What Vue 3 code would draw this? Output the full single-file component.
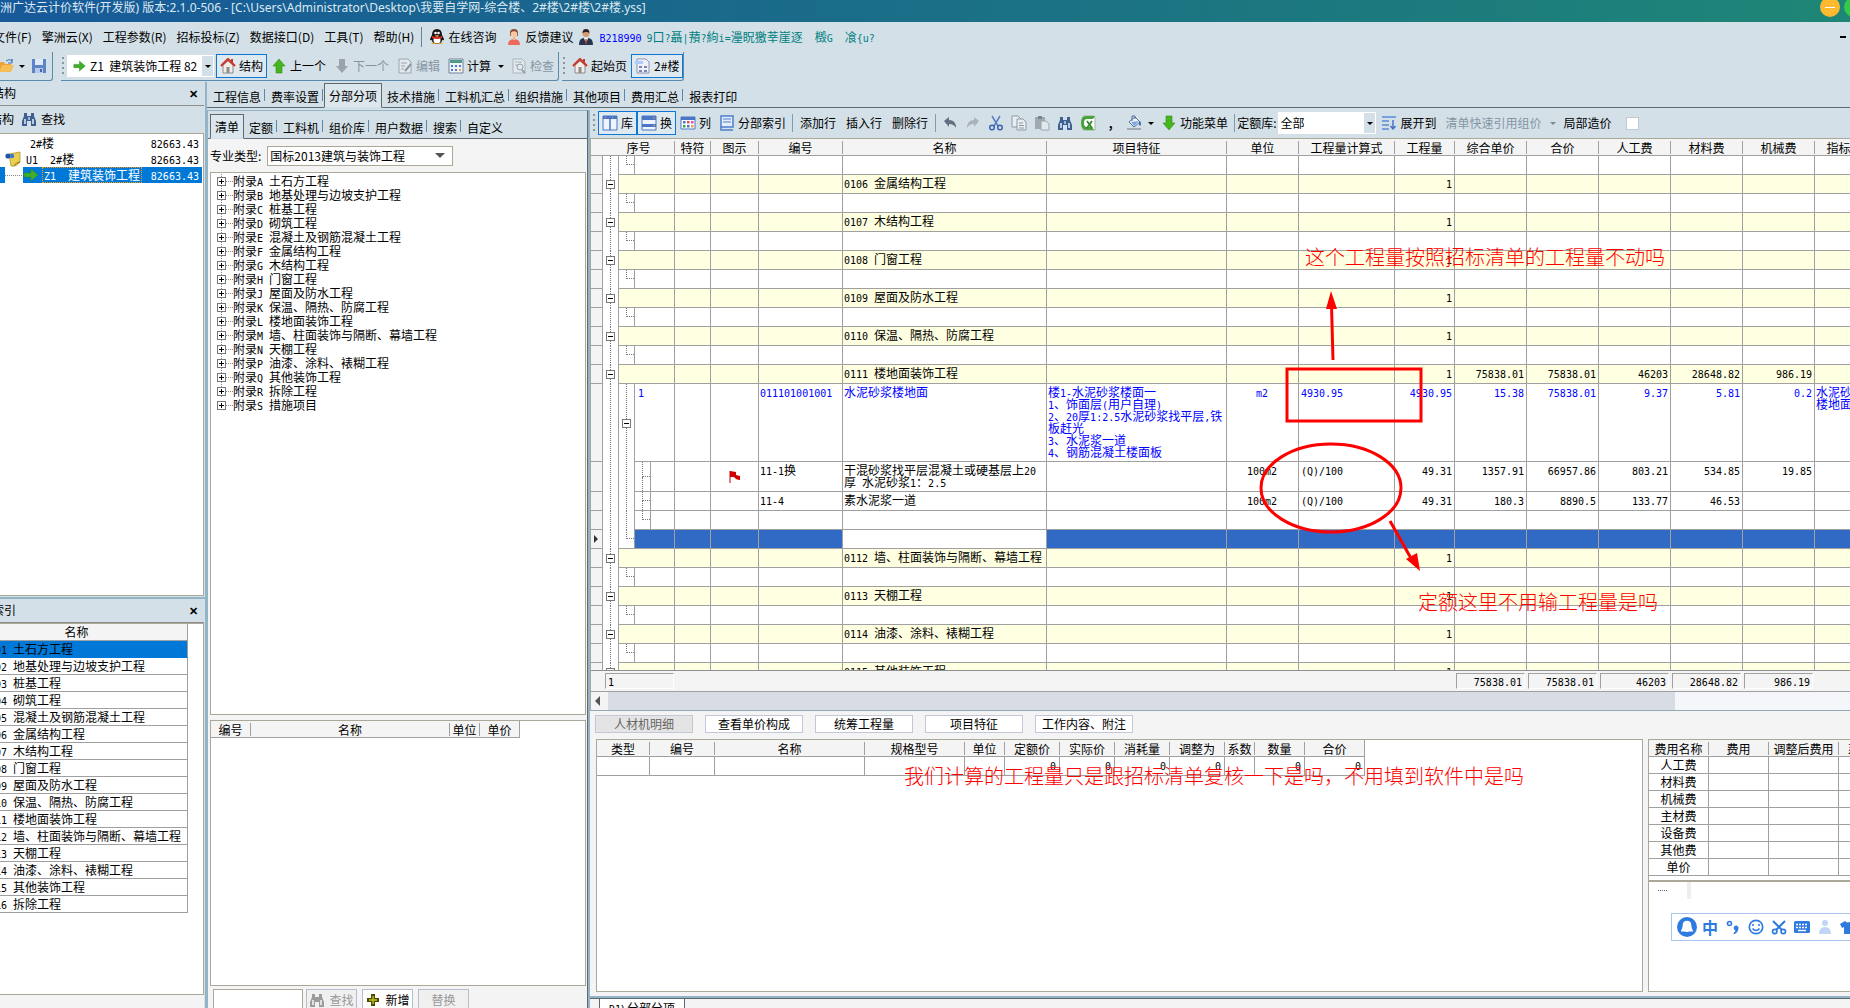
<script setup>
import { h } from 'vue'

const glyphs = {
  folder: '<path d="M1 14V4h5l1 2h6v2" fill="#e9a33a"/><path d="M1 14l3-7h12l-3 7z" fill="#f5bd55"/><path d="M8 3q3-3 6 0V1v4h-4" fill="none" stroke="#3f6fb5"/>',
  save: '<path d="M1 1h14v14H1z" fill="#5d83c9"/><path d="M4 1h8v6H4z" fill="#dfe9f7"/><path d="M4 10h8v5H4z" fill="#b7c9e8"/><path d="M9 11h2v3H9z" fill="#4469ad"/>',
  right: '<path d="M1 6h7V2l7 6-7 6v-4H1z" fill="#3fae2a" stroke="#2a8a1b" stroke-width=".6"/>',
  up: '<path d="M8 1l6 7h-3v7H5V8H2z" fill="#45b61e" stroke="#2f8f14" stroke-width=".6"/>',
  downGray: '<path d="M8 15l6-7h-3V1H5v7H2z" fill="#98a3aa"/>',
  down: '<path d="M8 15l6-7h-3V1H5v7H2z" fill="#45b61e" stroke="#2f8f14" stroke-width=".6"/>',
  home: '<path d="M3 7v8h10V7L8 3z" fill="#f3ede6" stroke="#8a8a8a"/><path d="M1 8l7-7 7 7" fill="none" stroke="#c8382c" stroke-width="2.2"/><path d="M6.500 9h3v6h-3z" fill="#8d8d8d"/><path d="M12 1v4" stroke="#c8382c" stroke-width="2"/>',
  edit: '<path d="M2 1h9l3 3v11H2z" fill="#e3e9ed" stroke="#9aa6ae"/><path d="M4 5h6M4 8h4M4 11h3" stroke="#9aa6ae"/><path d="M14 6l-6 7" stroke="#8b979f" stroke-width="2"/>',
  calc: '<path d="M1 1h14v14H1z" fill="#eef3f8" stroke="#6f8299"/><path d="M2 2h12v3H2z" fill="#4f9c86"/><path d="M3 7h2v2H3zM7 7h2v2H7zM3 11h2v2H3zM7 11h2v2H7z" fill="#4e78c8"/><path d="M11 7h2v2h-2z" fill="#4e78c8"/><path d="M11 11h2v2h-2z" fill="#e8a33c"/>',
  check: '<path d="M2 1h9l3 3v11H2z" fill="#e3e9ed" stroke="#a9b4bb"/><path d="M4 4h7M4 7h3" stroke="#a9b4bb"/><circle cx="9" cy="9" r="3" fill="none" stroke="#95a1a9"/><path d="M11 12l3 3" stroke="#95a1a9" stroke-width="2"/>',
  doc: '<path d="M2 1h9l3 3v11H2z" fill="#eef1f8" stroke="#8f93b8"/><path d="M0 3h8v3H0z" fill="#a9cdf5"/><path d="M4 8h3v2H4zM9 8h3v2H9zM4 12h3v2H4zM9 12h3v2H9z" fill="#8084b4"/>',
  find: '<path d="M3 2h3v3h4V2h3v3l2 5v5h-5v-5H6v5H1v-5l2-5z" fill="#3f608f"/><path d="M3 8h2v5H3zM11 8h2v5h-2z" fill="#b9cbe4"/><path d="M7 6h2v3H7z" fill="#9db5d6"/>',
  findGray: '<path d="M3 2h3v3h4V2h3v3l2 5v5h-5v-5H6v5H1v-5l2-5z" fill="#9b9b9b"/><path d="M3 8h2v5H3zM11 8h2v5h-2z" fill="#e0e0e0"/>',
  lib: '<path d="M1 1h14v14H1z" fill="#eef4fd" stroke="#4a76c4"/><path d="M1 1h14v3H1z" fill="#4a76c4"/><path d="M8 4v11" stroke="#4a76c4" stroke-width="1.500"/><path d="M3 2.500h1M10 2.500h1" stroke="#f28b6f"/>',
  swap: '<path d="M1 1h14v14H1z" fill="#eef4fd" stroke="#4a76c4"/><path d="M1 1h14v4H1zM1 9h14v3H1z" fill="#4a76c4"/><path d="M12 3h2M12 10.500h2" stroke="#f28b6f"/>',
  cols: '<path d="M1 2h14v12H1z" fill="#fff" stroke="#4a76c4"/><path d="M1 2h14v3H1z" fill="#4a76c4"/><path d="M3 6h2.500v2.500H3zM7 10h2.500v2.500H7z" fill="#3f78d8"/><path d="M7 6h2.500v2.500H7z" fill="#e54b4b"/><path d="M11 6h2.500v2.500H11z" fill="#e54bb0"/><path d="M3 10h2.500v2.500H3z" fill="#38a838"/><path d="M11 10h2.500v2.500H11z" fill="#e5a13a"/>',
  index: '<path d="M2 1h12v11H2z" fill="#e6eefb" stroke="#4f7ccb" stroke-width="1.500"/><path d="M4 4h8M4 7h8" stroke="#4f7ccb"/><path d="M2 12v3h12" fill="none" stroke="#4f7ccb" stroke-width="1.500"/>',
  undo: '<path d="M2 6l5-4v3q7 0 7 8-2-4-7-4v3z" fill="#5e6f80"/>',
  redo: '<path d="M14 6L9 2v3q-7 0-7 8 2-4 7-4v3z" fill="#a9b3bb"/>',
  cut: '<path d="M4 1l6 10M12 1L6 11" stroke="#5b7fc0" stroke-width="1.500"/><circle cx="4" cy="12.500" r="2.300" fill="none" stroke="#3d62b0" stroke-width="1.500"/><circle cx="12" cy="12.500" r="2.300" fill="none" stroke="#3d62b0" stroke-width="1.500"/>',
  copy: '<path d="M1 1h6l3 3v8H1z" fill="#e8edf1" stroke="#8e9aa3"/><path d="M6 4h6l3 3v8H6z" fill="#e8edf1" stroke="#8e9aa3"/><path d="M8 8h4M8 10.500h5M8 13h5" stroke="#8e9aa3"/>',
  paste: '<path d="M1 2h10v12H1z" fill="#9fabb3"/><path d="M4 1h4v3H4z" fill="#74828c"/><path d="M7 6h5l3 3v6H7z" fill="#e3e8ec" stroke="#9aa6ae"/>',
  excel: '<path d="M3 1h11l1 2v12H3z" fill="#fff" stroke="#9fb49f"/><path d="M15 1H6Q1 1 1 8t5 7h8l-2-3H7Q4 12 4 8t3-4h6z" fill="#4aa23c"/><path d="M7 6l5 7M12 6l-5 7" stroke="#2f8a2a" stroke-width="1.800"/>',
  paint: '<path d="M3 7l6-5 5 5-6 5z" fill="#eef3fa" stroke="#50709e"/><path d="M6 6V1h3v3" fill="none" stroke="#50709e"/><path d="M5 7l8-1-5 5z" fill="#7da6dc"/><path d="M14 6q2 3 0 5-2-2 0-5" fill="#2f69b5"/><path d="M1 13h14v2H1z" fill="#a3a9ae"/>',
  expand: '<path d="M1 2h14M1 6h7M1 10h7M1 14h7" stroke="#5a8ad6" stroke-width="1.600"/><path d="M12 5v8M9.500 11l2.500 3 2.500-3" fill="none" stroke="#3f6fc8" stroke-width="1.400"/>',
  qq: '<path d="M8 0q5 0 5 6l2 4q0 2-2 1 0 4-5 4t-5-4q-2 1-2-1l2-4q0-6 5-6" fill="#161616"/><ellipse cx="8" cy="11" rx="3.500" ry="3.500" fill="#fff"/><path d="M3 7q5 2 10 0v2q-5 2-10 0z" fill="#e02b20"/><circle cx="6.500" cy="4" r="1.300" fill="#fff"/><circle cx="9.500" cy="4" r="1.300" fill="#fff"/><path d="M5.500 6.200h5L8 7.500z" fill="#f5a41c"/><path d="M2 15q2-3 5 0zM9 15q3-3 5 0z" fill="#f5a41c"/>',
  girl: '<path d="M4 4q0-4 4-4t4 4v3H4z" fill="#8d4a2e"/><circle cx="8" cy="5.500" r="3.300" fill="#f6c9a4"/><path d="M2 16q0-6 6-6t6 6z" fill="#ee6a5c"/><path d="M7 8h2v3H7z" fill="#f0b78f"/>',
  man: '<circle cx="8" cy="4.500" r="3.500" fill="#d79b72"/><path d="M4.500 4q0-4 3.500-4t3.500 4q-3-2-7 0" fill="#2c2422"/><path d="M1 16q0-7 5-7h4q5 0 5 7z" fill="#26364f"/><path d="M6 9h4l-2 6z" fill="#fff"/><path d="M7.500 10h1l.5 4-1 1-1-1z" fill="#b32727"/>',
  book: '<path d="M4 3l11-2v10q-3 5-9 4z" fill="#e9cf52" stroke="#a98d1e" stroke-width=".7"/><path d="M15 11q-4 0-6 4" fill="none" stroke="#8d7415"/><circle cx="3" cy="5" r="2.600" fill="#2456a8"/><circle cx="7" cy="5" r="2.200" fill="#3c78d0"/>',
  flag: '<path d="M4 2v12" stroke="#b00" /><path d="M4 2l6 1v3l4 1v4q-4 0-6-3H4z" fill="#cf0000"/>',
  plus: '<path d="M6 2h4v4h4v4h-4v4H6v-4H2V6h4z" fill="#4a4a00"/><path d="M7.300 4h1.400v3.300H12v1.400H8.700V12H7.300V8.700H4V7.300h3.300z" fill="#c9c21a"/>',
  ime: '<circle cx="8" cy="8" r="8" fill="#2e7be0"/><path d="M8 3q3.500 0 3.500 4 0 2 1.500 4.500h-3L8.500 12h-1L6 11.500H3Q4.500 9 4.500 7 4.500 3 8 3" fill="#fff"/>',
  comma: '<circle cx="4.500" cy="4.500" r="2" fill="none" stroke="#2e7be0" stroke-width="1.600"/><path d="M9 15q4-2 4-5.500a2 2 0 1 0-2 1.500q0 2-2 3z" fill="#2e7be0" stroke="#2e7be0"/>',
  smile: '<circle cx="8" cy="8" r="6.700" fill="none" stroke="#2e7be0" stroke-width="1.700"/><path d="M5 5v2M11 5v2M4.500 9.500q3.500 4 7 0" fill="none" stroke="#2e7be0" stroke-width="1.600"/>',
  imeCut: '<path d="M2 2l9 9M14 2l-9 9" stroke="#2e7be0" stroke-width="2"/><circle cx="3.700" cy="12.500" r="2.200" fill="none" stroke="#2e7be0" stroke-width="1.700"/><circle cx="12.300" cy="12.500" r="2.200" fill="none" stroke="#2e7be0" stroke-width="1.700"/>',
  keys: '<rect x="0" y="2" width="16" height="12" rx="1.500" fill="#2e7be0"/><path d="M2 5.500h12M2 8.500h12" stroke="#fff" stroke-width="1.700" stroke-dasharray="2 1"/><path d="M4 11.500h8" stroke="#fff" stroke-width="1.500"/>',
  person: '<circle cx="8" cy="4" r="3" fill="#c0d6f4"/><path d="M2 15q0-7 6-7t6 7z" fill="#c0d6f4"/>',
  shirt: '<path d="M0 5l5-3q3 3 6 0l5 3-2 4-2-1v7H4V8L2 9z" fill="#2e7be0"/>',
}
const Icon = (p) => h('svg', { class: 'ico', viewBox: '0 0 16 16', 'aria-hidden': 'true', innerHTML: glyphs[p.name] })
Icon.props = ['name']

// Splits Latin runs from Han text so they sit on the half-width grid.
const Mix = (p) =>
  h('span', { class: 'mix' }, (p.t.match(/[\x20-\x7e]+|[^\x20-\x7e]+/g) || []).map((s) =>
    /^[\x20-\x7e]/.test(s) ? h('span', { class: 'lat' }, s) : s))
Mix.props = ['t']

const menus = ['文件(F)', '擎洲云(X)', '工程参数(R)', '招标投标(Z)', '数据接口(D)', '工具(T)', '帮助(H)']
const mainTabs = ['工程信息', '费率设置', '分部分项', '技术措施', '工料机汇总', '组织措施', '其他项目', '费用汇总', '报表打印']
const subTabs = ['清单', '定额', '工料机', '组价库', '用户数据', '搜索', '自定义']

const names = ['土石方工程', '地基处理与边坡支护工程', '桩基工程', '砌筑工程', '混凝土及钢筋混凝土工程', '金属结构工程',
  '木结构工程', '门窗工程', '屋面及防水工程', '保温、隔热、防腐工程', '楼地面装饰工程', '墙、柱面装饰与隔断、幕墙工程',
  '天棚工程', '油漆、涂料、裱糊工程', '其他装饰工程', '拆除工程']
const letters = 'ABCDEFGHJKLMNPQRS'
const appendix = [...names, '措施项目'].map((n, i) => `附录${letters[i]} ${n}`)
const code = (i) => '01' + String(i + 1).padStart(2, '0')
const indexRows = names.map((n, i) => `${code(i)} ${n}`)

const cols = [
  ['序号', 72], ['特符', 36], ['图示', 48], ['编号', 84], ['名称', 204], ['项目特征', 180], ['单位', 72], ['工程量计算式', 96],
  ['工程量', 60], ['综合单价', 72], ['合价', 72], ['人工费', 72], ['材料费', 72], ['机械费', 72], ['指标名称', 72],
]
const blank = () => ({ boxes: ['v', 'l'], h: 19 })
const section = (i, nums = []) => ({ kind: 'section', boxes: ['e'], h: 19, name: [indexRows[i]], nums: ['1', ...nums] })
const rows = [
  blank(),
  section(5), blank(), section(6), blank(), section(7), blank(), section(8), blank(), section(9), blank(),
  section(10, ['75838.01', '75838.01', '46203', '28648.82', '986.19']),
  {
    kind: 'item', boxes: ['v', 'f'], h: 78, no: '1', code: '011101001001', name: ['水泥砂浆楼地面'],
    feat: ['楼1-水泥砂浆楼面一', '1、饰面层(用户自理)', '2、20厚1:2.5水泥砂浆找平层,铁', '板赶光', '3、水泥浆一道', '4、钢筋混凝土楼面板'],
    unit: 'm2', expr: '4930.95', nums: ['4930.95', '15.38', '75838.01', '9.37', '5.81', '0.2'], tag: ['水泥砂浆', '楼地面'],
  },
  {
    boxes: ['v', 'v', 't'], h: 30, flag: true, code: '11-1换', name: ['干混砂浆找平层混凝土或硬基层上20', '厚 水泥砂浆1：2.5'],
    unit: '100m2', expr: '(Q)/100', nums: ['49.31', '1357.91', '66957.86', '803.21', '534.85', '19.85'],
  },
  {
    boxes: ['v', 'v', 't'], h: 19, code: '11-4', name: ['素水泥浆一道'],
    unit: '100m2', expr: '(Q)/100', nums: ['49.31', '180.3', '8890.5', '133.77', '46.53'],
  },
  { boxes: ['v', 'v', 'l'], h: 19 },
  { kind: 'current', boxes: ['v', 'l'], h: 19 },
  section(11), blank(), section(12), blank(), section(13), blank(), section(14),
]
const totals = ['75838.01', '75838.01', '46203', '28648.82', '986.19']

const detailTabs = ['人材机明细', '查看单价构成', '统筹工程量', '项目特征', '工作内容、附注']
const detailCols = [['类型', 53], ['编号', 65], ['名称', 150], ['规格型号', 100], ['单位', 40], ['定额价', 55, '0'], ['实际价', 55, '0'],
  ['消耗量', 55, '0'], ['调整为', 55, '0'], ['系数', 30], ['数量', 50, '0'], ['合价', 60, '0']]
const feeCols = [['费用名称', 60], ['费用', 60], ['调整后费用', 70], ['系数', 42]]
const fees = ['人工费', '材料费', '机械费', '主材费', '设备费', '其他费', '单价']
const itemCols = [['编号', 40], ['名称', 199], ['单位', 30], ['单价', 40]]
const sum = (list) => list.reduce((a, c) => a + c[1], 0)
</script>

<template>
  <div class="app">
    <header class="title">
      <h1>洲广达云计价软件(开发版) 版本:2.1.0-506 - [C:\Users\Administrator\Desktop\我要自学网-综合楼、2#楼\2#楼\2#楼.yss]</h1>
      <div class="winbtns">
        <button class="min" aria-label="最小化"></button>
        <button class="max" aria-label="最大化"></button>
      </div>
    </header>

    <nav class="menubar">
      <button v-for="m in menus" :key="m">{{ m }}</button>
      <i class="sep"></i>
      <button class="pic"><Icon name="qq" />在线咨询</button>
      <button class="pic"><Icon name="girl" />反馈建议</button>
      <Icon name="man" />
      <span class="account"><Mix class="blue" t="B218990:" /><Mix class="teal" t="9口?聶|蕷?絇i=灅眖獥莘崖逐  檓G  飡{u?" /></span>
      <button class="mdi" aria-label="还原"></button>
    </nav>

    <div class="toolbar">
      <div class="group">
        <button aria-label="打开"><Icon name="folder" /></button><i class="caret"></i>
        <button class="wide" aria-label="保存"><Icon name="save" /></button>
      </div>
      <div class="group">
        <i class="grip"></i>
        <div class="picker">
          <Icon name="right" />
          <select aria-label="单位工程"><option>Z1&nbsp; 建筑装饰工程 82</option></select>
          <i class="drop"></i>
        </div>
        <button class="on"><Icon name="home" />结构</button>
        <button><Icon name="up" />上一个</button>
        <button disabled><Icon name="downGray" />下一个</button>
        <button disabled><Icon name="edit" />编辑</button>
        <button><Icon name="calc" />计算</button><i class="caret"></i>
        <button disabled><Icon name="check" />检查</button>
      </div>
      <div class="group">
        <i class="grip"></i>
        <button><Icon name="home" />起始页</button>
        <button class="on"><Icon name="doc" />2#楼</button>
      </div>
    </div>

    <div class="body">
      <aside class="left">
        <section class="pane structure">
          <div class="panehead"><h2>结构</h2><button class="close" aria-label="关闭">✕</button></div>
          <div class="panetools"><span>结构</span><button><Icon name="find" />查找</button></div>
          <ul class="project">
            <li class="root"><Mix t="2#楼" /><Mix class="val" t="82663.43" /></li>
            <li class="unit"><Icon name="book" /><Mix t="U1  2#楼" /><Mix class="val" t="82663.43" /></li>
            <li class="leaf"><i class="gap"></i><div class="hit"><Icon name="right" /><Mix class="focus" t="Z1  建筑装饰工程" /><Mix class="val" t="82663.43" /></div></li>
          </ul>
        </section>
        <section class="pane indexes">
          <div class="panehead"><h2>索引</h2><button class="close" aria-label="关闭">✕</button></div>
          <div class="indexbox">
            <table class="index">
              <thead><tr><th>名称</th></tr></thead>
              <tbody><tr v-for="(r, i) in indexRows" :key="r" :class="{ sel: i === 0 }"><td><Mix :t="r" /></td></tr></tbody>
            </table>
          </div>
          <div class="status"></div>
        </section>
      </aside>

      <main class="work">
        <nav class="tabs">
          <button v-for="t in mainTabs" :key="t" :class="{ cur: t === '分部分项' }">{{ t }}</button>
        </nav>
        <div class="cols">
          <section class="library">
            <nav class="tabs small">
              <button v-for="t in subTabs" :key="t" :class="{ cur: t === '清单' }">{{ t }}</button>
            </nav>
            <div class="type">
              <label for="kind">专业类型:</label>
              <div class="kindbox"><select id="kind"><option>国标2013建筑与装饰工程</option></select><i class="drop"></i></div>
            </div>
            <ul class="tree">
              <li v-for="a in appendix" :key="a"><button class="box plus" aria-label="展开"></button><i class="dash"></i><Mix :t="a" /></li>
            </ul>
            <div class="items">
              <table :style="{ width: sum(itemCols) + 'px' }">
                <colgroup><col v-for="c in itemCols" :key="c[0]" :style="{ width: c[1] + 'px' }"></colgroup>
                <thead><tr><th v-for="c in itemCols" :key="c[0]"><span>{{ c[0] }}</span></th></tr></thead>
              </table>
            </div>
            <div class="search">
              <input aria-label="查找内容">
              <button disabled><Icon name="findGray" />查找</button>
              <button><Icon name="plus" />新增</button>
              <button disabled>替换</button>
            </div>
          </section>

          <section class="bill">
            <div class="tools">
              <i class="grip"></i>
              <button class="on"><Icon name="lib" />库</button><button class="on"><Icon name="swap" />换</button>
              <button><Icon name="cols" />列</button>
              <button><Icon name="index" />分部索引</button>
              <i class="sep"></i>
              <button class="txt">添加行</button><button class="txt">插入行</button><button class="txt">删除行</button>
              <i class="sep"></i>
              <button v-for="n in ['undo', 'redo', 'cut', 'copy', 'paste', 'find', 'excel']" :key="n" class="bare" :aria-label="n"><Icon :name="n" /></button>
              <button class="bare"><b>,</b></button>
              <button class="bare" aria-label="填充"><Icon name="paint" /></button><i class="caret"></i>
              <button><Icon name="down" />功能菜单</button>
              <i class="sep"></i>
              <label for="lib">定额库:</label>
              <div class="libbox"><select id="lib"><option>全部</option></select><i class="drop"></i></div>
              <button><Icon name="expand" />展开到</button>
              <button class="txt" disabled>清单快速引用组价</button><i class="caret dim"></i>
              <label class="partial" for="part">局部造价</label><input id="part" type="checkbox">
            </div>

            <div class="grid">
              <div class="gridview">
                <table :style="{ width: sum(cols) + 12 + 'px' }">
                  <colgroup><col class="gutcol"><col v-for="c in cols" :key="c[0]" :style="{ width: c[1] + 'px' }"></colgroup>
                  <thead><tr><th></th><th v-for="c in cols" :key="c[0]"><span>{{ c[0] }}</span></th></tr></thead>
                  <tbody>
                    <tr v-for="(r, i) in rows" :key="i" :class="r.kind" :style="{ height: r.h + 'px' }">
                      <td class="gut"><i v-if="r.kind === 'current'"></i></td>
                      <td class="seq" :style="{ height: r.h + 'px' }">
                        <div>
                          <span v-for="(b, k) in r.boxes" :key="k" class="lv" :class="[b, { end: k && k === r.boxes.length - 1 && b !== 'f' }]">
                            <button v-if="b === 'e' || b === 'f'" class="box" aria-label="折叠"></button>
                          </span>
                          <span class="fill"><Mix v-if="r.no" :t="r.no" /></span>
                        </div>
                      </td>
                      <td></td>
                      <td class="mark"><Icon v-if="r.flag" name="flag" /></td>
                      <td><div v-if="r.code"><Mix :t="r.code" /></div></td>
                      <td class="name"><div v-for="l in r.name" :key="l"><Mix :t="l" /></div></td>
                      <td><div v-for="l in r.feat" :key="l"><Mix :t="l" /></div></td>
                      <td class="mid"><div v-if="r.unit"><Mix :t="r.unit" /></div></td>
                      <td class="expr"><div v-if="r.expr"><Mix :t="r.expr" /></div></td>
                      <td v-for="n in 6" :key="n" class="num"><div v-if="r.nums && r.nums[n - 1]"><Mix :t="r.nums[n - 1]" /></div></td>
                      <td><div v-for="l in r.tag" :key="l"><Mix :t="l" /></div></td>
                    </tr>
                  </tbody>
                </table>
              </div>
              <div class="foot">
                <span class="count"><Mix t="1" /></span>
                <span v-for="(t, i) in totals" :key="i" class="total"><Mix :t="t" /></span>
              </div>
              <div class="scroll"><button aria-label="向左"></button><i class="thumb"></i></div>
            </div>

            <div class="detail">
              <div class="dtabs"><button v-for="(t, i) in detailTabs" :key="t" :class="{ cur: i === 0 }">{{ t }}</button></div>
              <div class="dboxes">
                <div class="dbox">
                  <table :style="{ width: sum(detailCols) + 'px' }">
                    <colgroup><col v-for="c in detailCols" :key="c[0]" :style="{ width: c[1] + 'px' }"></colgroup>
                    <thead><tr><th v-for="c in detailCols" :key="c[0]"><span>{{ c[0] }}</span></th></tr></thead>
                    <tbody><tr><td v-for="c in detailCols" :key="c[0]" class="num"><Mix v-if="c[2]" :t="c[2]" /></td></tr></tbody>
                  </table>
                </div>
                <div class="fbox">
                  <div class="fees">
                    <table :style="{ width: sum(feeCols) + 'px' }">
                      <colgroup><col v-for="c in feeCols" :key="c[0]" :style="{ width: c[1] + 'px' }"></colgroup>
                      <thead><tr><th v-for="c in feeCols" :key="c[0]"><span>{{ c[0] }}</span></th></tr></thead>
                      <tbody><tr v-for="f in fees" :key="f"><td class="mid">{{ f }}</td><td></td><td></td><td></td></tr></tbody>
                    </table>
                  </div>
                  <div class="note"><i class="dots"></i><i class="bar"></i></div>
                  <div class="ime">
                    <Icon class="big" name="ime" /><b>中</b><Icon v-for="n in ['comma', 'smile', 'imeCut', 'keys', 'person', 'shirt']" :key="n" :name="n" />
                  </div>
                </div>
              </div>
            </div>
            <div class="sheets"><button><Mix t="D1\分部分项" /></button></div>
          </section>
        </div>
      </main>
    </div>

    <svg class="notes">
      <g fill="none" stroke="#f00" stroke-width="3">
        <path d="M1333 360L1331.500 305" />
        <rect x="1287" y="369" width="134" height="52" />
        <ellipse cx="1331" cy="488" rx="70" ry="44" />
        <path d="M1390 521L1412 560" />
      </g>
      <path d="M1331 291l-5 18h11zM1420 571l-14-12 11-6z" fill="#f00" />
      <text x="1305" y="265">这个工程量按照招标清单的工程量不动吗</text>
      <text x="1418" y="610">定额这里不用输工程量是吗</text>
      <text x="904" y="784">我们计算的工程量只是跟招标清单复核一下是吗，不用填到软件中是吗</text>
    </svg>
  </div>
</template>

<style>
html, body { margin: 0; overflow: hidden; }
.ico { width: 16px; height: 16px; flex: none; display: block; }
.mix { white-space: pre; }
.mix .lat { font-family: "DejaVu Sans Mono", "Liberation Mono", monospace; font-size: 10px; line-height: 0; }
</style>

<style scoped>
.app {
  height: 100vh; display: flex; flex-direction: column; overflow: hidden; position: relative;
  background: #d4e0e8; color: #000; font: 12px/16px "Noto Sans CJK SC", "Noto Sans", sans-serif;
}
.app *, .app *::before, .app *::after { box-sizing: border-box; }
h1, h2, ul { margin: 0; padding: 0; font-size: 12px; font-weight: 400; list-style: none; }
button, select, input { font: inherit; color: inherit; border: 0; padding: 0; margin: 0; background: none; border-radius: 0; }
select { appearance: none; outline: 0; }
button { display: flex; align-items: center; white-space: nowrap; }
button:disabled { color: #8496a3; }
i { flex: none; }

.title { height: 22px; flex: none; display: flex; justify-content: space-between; background: linear-gradient(90deg, #17599a, #1b7383 60%, #1e8676); color: #dce9f2; overflow: hidden; }
.title h1 { line-height: 16px; white-space: nowrap; font-family: "Noto Sans", "Noto Sans CJK SC", sans-serif; }
.winbtns { display: flex; gap: 4px; margin: -3px -14px 0 0; }
.winbtns button { width: 20px; height: 20px; border-radius: 50%; justify-content: center; }
.min { background: #fdb92f; }
.min::after { content: ""; width: 10px; height: 1px; background: #fff; }
.max { background: #35c94a; }

.menubar { height: 30px; flex: none; display: flex; align-items: center; margin-left: -12px; }
.menubar > button { padding: 0 5px; }
.menubar .sep { width: 1px; height: 20px; background: #5f87a3; margin: 0 2px; }
.menubar .pic { gap: 3px; }
.account { display: flex; gap: 4px; margin-left: 5px; }
.blue { color: #00f; width: 43px; overflow: hidden; }
.teal { color: #008080; }
.menubar .mdi { margin-left: auto; margin-right: 4px; width: 6px; height: 2px; padding: 0; background: #000; }

.toolbar { height: 30px; flex: none; display: flex; padding-bottom: 1px; }
.toolbar .group { display: flex; align-items: center; border-bottom: 1px solid #5b8bab; border-right: 1px solid #5b8bab; border-bottom-right-radius: 3px; height: 29px; margin-right: 3px; }
.toolbar .group:first-child { margin-left: -2px; width: 55px; margin-right: 8px; }
.toolbar button { height: 24px; gap: 3px; padding: 0 4px; }
.toolbar .group:first-child button { padding: 0; }
.toolbar .group:first-child .caret { margin: 0 6px 0 5px; }
.toolbar .on, .tools > .on { border: 1px solid #0f78d4; background: #dfe9f0; padding: 0 3px; }
.caret { width: 0; border: 3px solid transparent; border-top-color: #000; border-bottom: 0; margin: 0 3px; }
.caret.dim { border-top-color: #7b8c98; }
.grip { width: 2px; height: 18px; margin: 0 3px 0 1px; background: repeating-linear-gradient(#8b979e 0 2px, transparent 2px 5px); }
.picker { display: flex; align-items: center; width: 147px; height: 22px; background: #fff; padding-left: 2px; margin-right: 2px; }
.picker .ico { width: 13px; margin: 0 4px; }
.picker select { flex: 1; min-width: 0; height: 22px; }
.drop { width: 12px; height: 100%; background: #d4e0e8; display: flex; align-items: center; justify-content: center; border: 1px solid #fff; border-left: 0; pointer-events: none; }
.drop::after { content: ""; border: 3px solid transparent; border-top-color: #000; border-bottom: 0; }

.body { flex: 1; min-height: 0; display: flex; }
.left { width: 207px; flex: none; display: flex; flex-direction: column; border-right: 2px solid #93b3c6; }
.pane { display: flex; flex-direction: column; padding-right: 1px; }
.structure { flex: 1; min-height: 0; border-bottom: 2px solid #93b3c6; padding-bottom: 1px; }
.indexes { height: 409px; flex: none; }
.panehead { height: 24px; flex: none; display: flex; align-items: center; justify-content: space-between; border-bottom: 1px solid #8e8e8e; padding-right: 6px; padding-bottom: 2px; margin-left: -8px; }
.close { font-size: 11px; line-height: 16px; font-weight: 700; }
.panetools { height: 27px; flex: none; display: flex; align-items: center; margin-left: -10px; gap: 7px; padding-bottom: 2px; }
.panetools button { gap: 4px; }
.project { flex: 1; background: #fff; border: 1px solid #aca899; border-left: 0; padding-top: 1px; }
.project li { height: 16px; display: flex; align-items: center; padding-right: 4px; }
.project .val { margin-left: auto; }
.root { padding-left: 30px; }
.unit { padding-left: 5px; gap: 5px; }
.project .leaf { border-left: 5px solid #0078d7; padding-right: 1px; }
.gap { width: 18px; height: 16px; background: linear-gradient(90deg, #888 50%, transparent 0) 8px 8px / 2px 1px repeat-x; }
.hit { flex: 1; display: flex; align-items: center; background: #0078d7; color: #fff; height: 16px; padding-right: 3px; }
.hit .focus { outline: 1px dotted #f90; outline-offset: -1px; padding: 0 2px; line-height: 16px; margin-left: 3px; }

table { border-collapse: separate; border-spacing: 0; table-layout: fixed; }
th, td { padding: 0; font-weight: 400; border-right: 1px solid #a0a0a0; border-bottom: 1px solid #a0a0a0; white-space: nowrap; overflow: hidden; }
th { background: #f4f4f4; height: 17px; line-height: 16px; border-right: 0; text-align: center; }
th span { display: block; height: 13px; line-height: 13px; margin: 1px 0; border-right: 1px solid #a0a0a0; }
td { line-height: 12px; }
.indexbox { flex: 1; background: #fff; border: 1px solid #aca899; border-left: 0; overflow: hidden; }
.index { width: 222px; margin-left: -34px; }
.index th { border-right: 1px solid #a0a0a0; }
.index td { height: 17px; padding-left: 17px; line-height: 16px; }
.index .sel td { background: #0078d7; border-bottom-color: #0078d7; }
.status { height: 13px; flex: none; background: #f4f4f4; }

.work { flex: 1; min-width: 0; display: flex; flex-direction: column; }
.tabs { height: 26px; flex: none; display: flex; align-items: flex-end; padding-left: 1px; position: relative; box-shadow: inset 0 -1px #5d6a72; }
.tabs button { height: 23px; padding: 0 4px 0 5px; margin-right: 1px; background: linear-gradient(#5f87a3, #5f87a3) 100% 4px / 1px 12px no-repeat; }
.tabs button.cur { height: 25px; border: 1px solid #5d6a72; border-bottom-color: #d4e0e8; background: #dbe6ed; padding: 0 4px; margin: 0; }
.tabs button:last-child { background: none; }
.cols { flex: 1; min-height: 0; display: flex; padding-top: 2px; }
.library { width: 381px; flex: none; display: flex; flex-direction: column; background: #f4f4f4; border-top: 1px solid #93b3c6; border-left: 1px solid #93b3c6; border-right: 1px solid #5d6a72; padding: 0 0 0 2px; }
.tabs.small { height: 28px; background: #d4e0e8; margin-left: -2px; padding-left: 2px; }
.type { height: 33px; display: flex; align-items: center; gap: 6px; flex: none; }
.kindbox { width: 186px; height: 20px; border: 1px solid #aca899; background: #fff; display: flex; align-items: center; padding: 0 6px 0 2px; }
.kindbox select { flex: 1; height: 18px; }
.kindbox .drop { background: none; border: 0; }
.kindbox .drop::after { border: 5px solid transparent; border-top-color: #555; border-bottom: 0; }
.tree { flex: 1; background: #fff; border: 1px solid #aca899; padding: 1px 0 0 6px; margin-right: 1px; }
.tree li { height: 14px; display: flex; align-items: center; background: linear-gradient(#888 50%, transparent 0) 4px 0 / 1px 2px repeat-y; }
.tree li:last-child { background: none; }
.dash { width: 7px; height: 1px; background: repeating-linear-gradient(90deg, #888 0 1px, transparent 1px 2px); }
.box { width: 9px; height: 9px; flex: none; border: 1px solid #777; background: linear-gradient(#000, #000) center / 5px 1px no-repeat, #fff; }
.box.plus { background: linear-gradient(#000, #000) center / 5px 1px no-repeat, linear-gradient(#000, #000) center / 1px 5px no-repeat, #fff; }
.items { height: 266px; flex: none; background: #fff; border: 1px solid #aca899; margin: 5px 1px 0 0; }
.items th:last-child { border-right: 1px solid #a0a0a0; }
.search { height: 22px; flex: none; display: flex; gap: 5px; padding: 3px 0 0 3px; overflow: hidden; }
.search > * { height: 22px; flex: none; }
.search input { width: 90px; background: #fff; border: 1px solid #aca899; margin-right: -2px; }
.search button { width: 51px; justify-content: center; gap: 4px; border: 1px solid #b9bdcb; background: #fff; }
.search button:disabled { background: #f0f0f0; color: #999; }

.bill { flex: 1; min-width: 0; display: flex; flex-direction: column; border-left: 2px solid #93b3c6; }
.tools { height: 28px; flex: none; display: flex; align-items: center; padding: 0 0 2px 2px; overflow: hidden; }
.tools > button { height: 24px; gap: 3px; padding: 0 4px; flex: none; }
.tools > .txt { padding: 0 5px; }
.tools .sep { width: 1px; height: 18px; background: #7f9cae; margin: 0 2px; }
.tools > .bare { padding: 0 3px; width: 23px; justify-content: center; }
.tools label { white-space: nowrap; }
.libbox { width: 98px; height: 22px; background: #fff; display: flex; margin: 0 1px 0 2px; padding-left: 2px; flex: none; }
.libbox select { flex: 1; }
.tools .partial { margin: 0 14px 0 5px; }
.tools input { appearance: none; width: 13px; height: 13px; background: #fff; border: 1px solid #c3c9d3; flex: none; }

.grid { flex: 1; min-height: 0; display: flex; flex-direction: column; border-left: 1px solid #aca899; border-top: 1px solid #aca899; border-bottom: 1px solid #93a9b5; }
.gridview { flex: 1; min-height: 0; overflow: hidden; background: #fff; border-bottom: 1px solid #8f8f8f; }
.gutcol { width: 12px; }
.grid td { vertical-align: top; padding: 2px 2px 0 1px; }
.grid td > div { height: 12px; }
.grid td.gut { background: #f4f4f4; padding: 5px 0 0 3px; }
.gut i { display: block; width: 0; border: 4px solid transparent; border-left: 4px solid #333; border-right: 0; }
.grid td.seq { padding: 0; border-bottom: 0; }
.grid .seq > div { display: flex; height: 100%; }
.lv { width: 16px; flex: none; border-right: 1px solid #a0a0a0; display: flex; align-items: center; justify-content: center; position: relative; }
.lv.v, .lv.e, .lv.f { background: linear-gradient(#777 50%, transparent 0) 7px 0 / 1px 2px repeat-y; }
.lv.l::before, .lv.t::before { content: ""; position: absolute; left: 7px; top: 0; width: 8px; height: 50%; border-left: 1px dotted #777; border-bottom: 1px dotted #777; }
.lv.t::after { content: ""; position: absolute; left: 7px; top: 50%; height: 50%; border-left: 1px dotted #777; }
.lv.end, .fill { border-bottom: 1px solid #a0a0a0; }
.fill { flex: 1; padding: 2px 0 0 3px; }
.section td:not(.gut):not(.seq), .section .fill { background: #ffffe1; }
.item { color: #00f; }
.current td:not(.gut):not(.seq):not(.name), .current .fill { background: #316ac5; }
.mid { text-align: center; }
.grid td.num { text-align: right; }
.grid td.expr { padding-left: 2px; }
.mark .ico { margin: 5px auto 0; }
.foot { height: 21px; flex: none; display: flex; background: #f4f4f4; border-bottom: 1px solid #a0a0a0; padding: 2px 0 2px 14px; gap: 3px; }
.foot span { line-height: 14px; }
.count, .total { border-left: 1px solid #a0a0a0; border-top: 1px solid #a0a0a0; border-right: 1px solid #fff; border-bottom: 1px solid #fff; width: 69px; text-align: right; padding-right: 2px; flex: none; }
.count { text-align: left; padding-left: 2px; margin-right: 779px; }
.scroll { height: 18px; flex: none; display: flex; background: #f4f6fa; }
.scroll button { width: 17px; background: #f4f4f4; }
.scroll button::after { content: ""; border: 5px solid transparent; border-right-color: #555; border-left: 0; margin-left: 4px; }
.thumb { flex: 1; background: #d7dce5; margin-right: 175px; }

.detail { height: 287px; flex: none; display: flex; flex-direction: column; background: #f4f4f4; border-bottom: 2px solid #93b3c6; padding: 4px 0 4px 5px; }
.dtabs { display: flex; gap: 12px; height: 18px; flex: none; margin-bottom: 6px; }
.dtabs button { width: 98px; height: 18px; justify-content: center; background: #fff; border: 1px solid #c3c8d8; }
.dtabs .cur { background: #e4e4e4; color: #666; }
.dboxes { flex: 1; display: flex; gap: 5px; min-height: 0; padding-left: 1px; }
.dbox { flex: 1; min-width: 0; background: #fff; border: 1px solid #aca899; overflow: hidden; }
.dbox td { height: 19px; vertical-align: top; text-align: right; padding: 2px 3px 0 0; }
.dbox th:last-child { border-right: 1px solid #a0a0a0; }
.dbox th:last-child span, .items th:last-child span { border: 0; }
.fbox { width: 202px; flex: none; background: #fff; border: 1px solid #aca899; border-right: 0; display: flex; flex-direction: column; overflow: hidden; position: relative; }
.fees { height: 142px; flex: none; border-bottom: 2px solid #aca899; }
.fees td { height: 17px; line-height: 16px; }
.note { display: flex; }
.dots { width: 10px; height: 1px; margin: 8px 19px 0 9px; background: repeating-linear-gradient(90deg, #666 0 1px, transparent 1px 2px); }
.bar { width: 4px; height: 17px; background: #eee; }
.ime { position: absolute; left: 22px; top: 173px; display: flex; align-items: center; gap: 7px; height: 28px; border: 1px solid #a9c4ee; background: #fff; padding: 0 5px; }
.ime .big { width: 20px; height: 20px; margin-right: -2px; }
.ime b { width: 16px; color: #2e7be0; font-size: 16px; }
.sheets { height: 10px; flex: none; background: #f4f4f4; border-top: 1px solid #5d6a72; overflow: hidden; padding-left: 9px; }
.sheets button { height: 20px; margin-top: -1px; padding: 0 9px; background: #fff; border: solid #5d6a72; border-width: 0 1px; }

.notes { position: absolute; left: 0; top: 0; width: 100%; height: 100%; pointer-events: none; }
.notes text { font-size: 20px; font-weight: 300; fill: #f00; }
</style>
